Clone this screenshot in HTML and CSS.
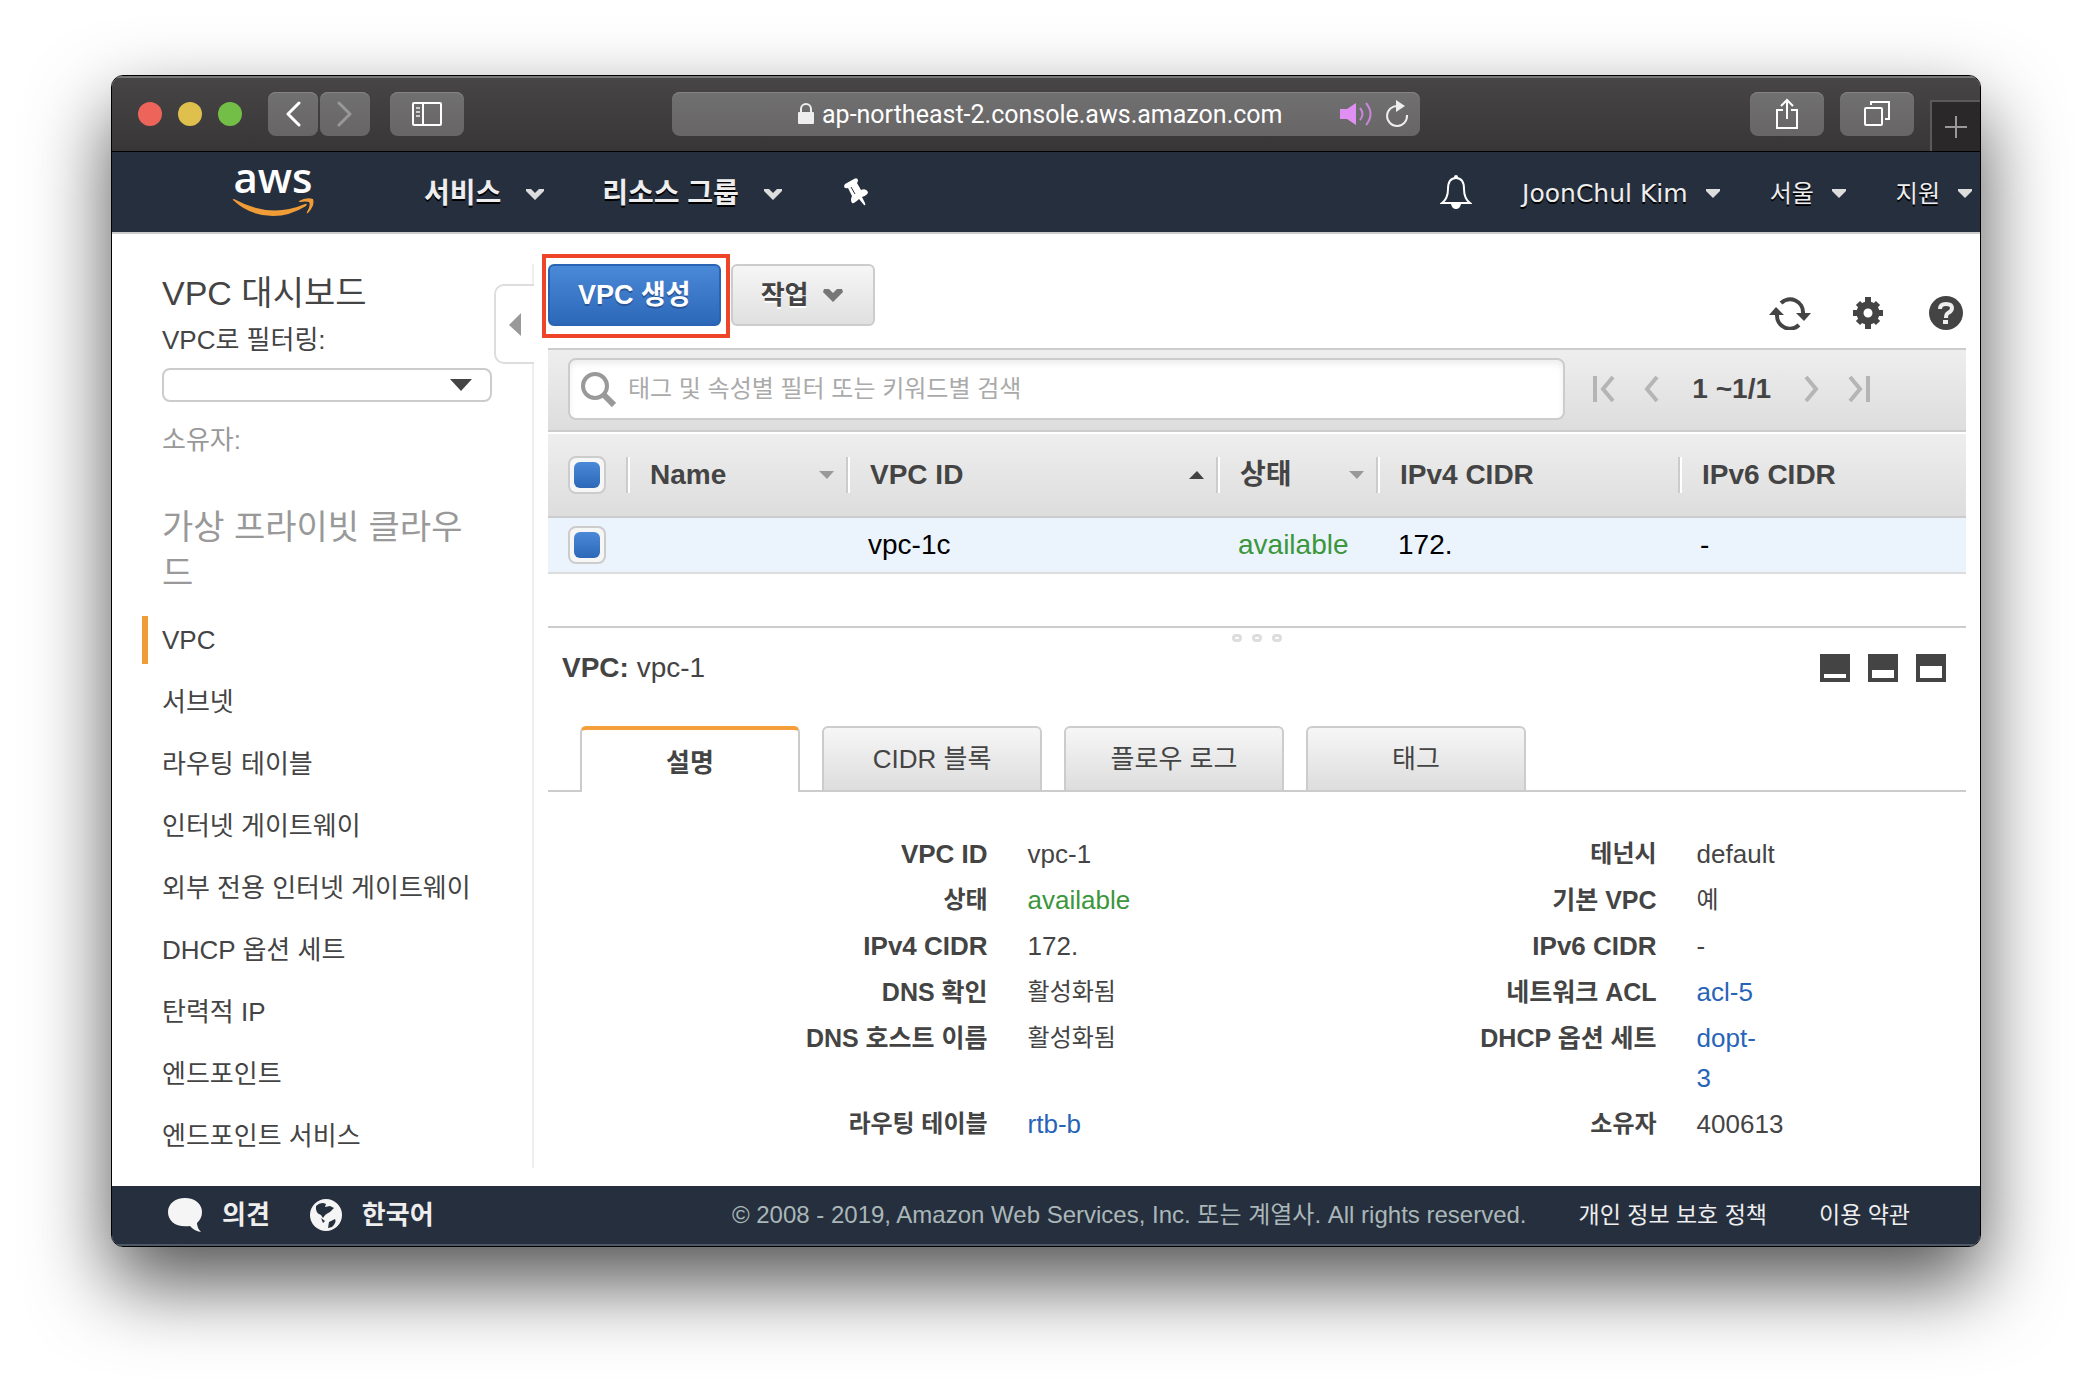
FILE: index.html
```html
<!doctype html>
<html lang="ko">

<head>
	<title>VPC 대시보드</title>
	<meta charset="UTF-8">
	<link rel="stylesheet" href="styles.css">
</head>

<body>

<div class="window">

	<!-- Browser toolbar -->
	<div class="chrome">
		<div class="chrome-left">
			<span class="light red"></span>
			<span class="light yellow"></span>
			<span class="light green"></span>
			<div class="history">
				<button class="chrome-btn narrow" aria-label="뒤로">
					<svg width="16" height="26" viewBox="0 0 16 26"><path d="M14 2 L3 13 L14 24" fill="none" stroke="#fff" stroke-width="3" stroke-linecap="round" stroke-linejoin="round"/></svg>
				</button>
				<button class="chrome-btn narrow" aria-label="앞으로">
					<svg width="16" height="26" viewBox="0 0 16 26"><path d="M2 2 L13 13 L2 24" fill="none" stroke="#98979a" stroke-width="3" stroke-linecap="round" stroke-linejoin="round"/></svg>
				</button>
			</div>
			<button class="chrome-btn" aria-label="사이드바">
				<svg width="30" height="24" viewBox="0 0 30 24" fill="none" stroke="#fff" stroke-width="2"><rect x="1" y="1" width="28" height="22" rx="1"/><path d="M11 1 V23"/><path d="M4 6 H8 M4 10 H8 M4 14 H8" stroke="#ccc"/></svg>
			</button>
		</div>
		<div class="address">
			<span></span>
			<label class="address-text">
				<svg width="16" height="22" viewBox="0 0 16 22"><rect x="0" y="9" width="16" height="12" rx="1" fill="#eee"/><path d="M3 10 V6 a5 5 0 0 1 10 0 V10" fill="none" stroke="#eee" stroke-width="2"/></svg>
				<input class="url" type="text" aria-label="주소" value="ap-northeast-2.console.aws.amazon.com">
			</label>
			<span class="address-icons">
				<svg width="34" height="24" viewBox="0 0 34 24"><path d="M0 7 H7 L16 1 V23 L7 17 H0 Z" fill="#e08ff2"/><path d="M20 6 Q25 12 20 18 M26 1 Q35 12 26 23" fill="none" stroke="#c984dc" stroke-width="2"/></svg>
				<svg width="24" height="28" viewBox="0 0 24 28"><path d="M13 6 A10 10 0 1 0 22 15" fill="none" stroke="#eee" stroke-width="2"/><path d="M11 0 L20 6 L11 12 Z" fill="#eee"/></svg>
			</span>
		</div>
		<div class="chrome-right">
			<button class="chrome-btn" aria-label="공유">
				<svg width="24" height="32" viewBox="0 0 24 32" fill="none" stroke="#fff" stroke-width="2"><path d="M8 12 H2 V30 H22 V12 H16 M12 21 V3 M6 8 L12 2 L18 8"/></svg>
			</button>
			<button class="chrome-btn" aria-label="탭 보기">
				<svg width="26" height="26" viewBox="0 0 26 26" fill="none" stroke="#fff" stroke-width="2"><rect x="1" y="7" width="17" height="17" rx="1"/><path d="M7 4 V1 H25 V18 H21"/></svg>
			</button>
			<button class="new-tab" aria-label="새 탭">
				<svg width="22" height="22" viewBox="0 0 22 22"><path d="M11 0 V22 M0 11 H22" stroke="#999" stroke-width="2"/></svg>
			</button>
		</div>
	</div>

	<!-- AWS console header -->
	<header class="nav">
		<a class="logo" href="#">
			<span class="logo-text">aws</span>
			<svg width="82" height="19" viewBox="0 0 82 19" fill="#f09d38"><path d="M1 2 Q0 1 2 1 Q38 21 73 6 Q76 5 74 8 Q58 18 41 18 Q18 18 1 2 Z"/><path d="M67 3 Q74 -1 81 1 Q83 8 76 15 Q74 16 75 14 Q79 7 77 4 Q74 3 68 4 Q66 4 67 3 Z"/></svg>
		</a>
		<button class="nav-main">서비스 <svg width="18" height="11" viewBox="0 0 18 11"><path d="M0 0 H5 L9 4 L13 0 H18 V2 L9 11 L0 2 Z" fill="#ddd"/></svg></button>
		<button class="nav-main">리소스 그룹 <svg width="18" height="11" viewBox="0 0 18 11"><path d="M0 0 H5 L9 4 L13 0 H18 V2 L9 11 L0 2 Z" fill="#ddd"/></svg></button>
		<button class="nav-icon" aria-label="고정">
			<svg width="24" height="28" viewBox="0 0 24 28"><path d="M1 6 L10 1 Q13 -1 14 2 Q14 4 13 5 L17 12 Q22 10 24 14 Q24 17 18 19 L21 25 Q22 28 20 27 L15 21 Q10 26 8 25 Q6 22 8 18 L4 10 Q0 11 0 8 Z" fill="#fff"/><path d="M7 9 L11 16" stroke="#262f3e"/></svg>
		</button>
		<span class="spacer"></span>
		<button class="nav-icon" aria-label="알림">
			<svg width="32" height="34" viewBox="0 0 32 34"><path d="M16 3 C9 3 8 9 8 14 C8 21 6 25 2 28 H30 C26 25 24 21 24 14 C24 9 23 3 16 3 Z" fill="none" stroke="#fff" stroke-width="2"/><circle cx="16" cy="2" r="2" fill="#fff"/><path d="M11 29 H21 Q20 34 16 34 Q12 34 11 29 Z" fill="#fff"/></svg>
		</button>
		<button class="nav-sub user">JoonChul Kim <svg width="14" height="9" viewBox="0 0 14 9"><path d="M0 0 H14 V2 L7 9 L0 2 Z" fill="#ddd"/></svg></button>
		<button class="nav-sub">서울 <svg width="14" height="9" viewBox="0 0 14 9"><path d="M0 0 H14 V2 L7 9 L0 2 Z" fill="#ddd"/></svg></button>
		<button class="nav-sub">지원 <svg width="14" height="9" viewBox="0 0 14 9"><path d="M0 0 H14 V2 L7 9 L0 2 Z" fill="#ddd"/></svg></button>
	</header>

	<div class="content">

		<aside class="sidebar">
			<button class="collapse" aria-label="접기">
				<svg width="12" height="23" viewBox="0 0 12 23"><path d="M12 0 V23 L0 12 Z" fill="#999"/></svg>
			</button>
			<h1>VPC 대시보드</h1>
			<label class="filter-label" for="vpc-filter">VPC로 필터링:</label>
			<div class="select-wrap">
				<select id="vpc-filter"><option></option></select>
				<svg width="22" height="12" viewBox="0 0 22 12"><path d="M0 0 H22 L11 12 Z" fill="#444"/></svg>
			</div>
			<p class="owner">소유자:</p>
			<h2>가상 프라이빗 클라우드</h2>
			<nav class="menu">
				<a class="current" href="#">VPC</a>
				<a href="#">서브넷</a>
				<a href="#">라우팅 테이블</a>
				<a href="#">인터넷 게이트웨이</a>
				<a href="#">외부 전용 인터넷 게이트웨이</a>
				<a href="#">DHCP 옵션 세트</a>
				<a href="#">탄력적 IP</a>
				<a href="#">엔드포인트</a>
				<a href="#">엔드포인트 서비스</a>
			</nav>
		</aside>

		<main class="main">

			<div class="actions">
				<div class="highlight">
					<button class="btn primary">VPC 생성</button>
				</div>
				<button class="btn">작업 <svg width="20" height="13" viewBox="0 0 20 13"><path d="M1 0 H6 L10 4 L14 0 H19 L20 3 L10 13 L0 3 Z" fill="#777"/></svg></button>
				<span class="spacer"></span>
				<div class="tools">
					<button class="tool" aria-label="새로 고침">
						<svg width="42" height="34" viewBox="0 0 42 34"><path d="M12 7 A13 13 0 0 1 34 17 M30 29 A13 13 0 0 1 8 19" fill="none" stroke="#444" stroke-width="4"/><path d="M27 17 H42 L35 25 Z M0 19 H15 L7 11 Z" fill="#444"/></svg>
					</button>
					<button class="tool" aria-label="설정">
						<svg width="30" height="32" viewBox="0 0 30 32"><circle cx="15" cy="16" r="8" fill="none" stroke="#444" stroke-width="7"/><path d="M15 0 V7 M15 25 V32 M0 16 H7 M23 16 H30 M5 6 L9 10 M21 22 L25 26 M25 6 L21 10 M9 22 L5 26" stroke="#444" stroke-width="6"/></svg>
					</button>
					<button class="tool" aria-label="도움말">
						<svg width="34" height="34" viewBox="0 0 34 34"><circle cx="17" cy="17" r="17" fill="#444"/><path d="M11 13 Q11 8 17 8 Q23 8 23 12 Q23 15 19 17 Q17 18 17 22" fill="none" stroke="#eee" stroke-width="4"/><rect x="14" y="24" width="5" height="4" fill="#eee"/></svg>
					</button>
				</div>
			</div>

			<div class="filter-bar">
				<label class="search">
					<svg width="35" height="35" viewBox="0 0 35 35" fill="none" stroke="#999"><circle cx="14" cy="14" r="12" stroke-width="4"/><path d="M23 23 L33 33" stroke-width="6"/></svg>
					<input type="text" aria-label="검색" placeholder="태그 및 속성별 필터 또는 키워드별 검색">
				</label>
				<div class="pager">
					<button aria-label="처음"><svg width="22" height="26" viewBox="0 0 22 26" fill="none" stroke="#b5b5b5" stroke-width="4"><path d="M2 0 V26 M20 1 L10 13 L20 25"/></svg></button>
					<button aria-label="이전"><svg width="16" height="26" viewBox="0 0 16 26" fill="none" stroke="#b5b5b5" stroke-width="4"><path d="M14 1 L4 13 L14 25"/></svg></button>
					<span>1 ~1/1</span>
					<button aria-label="다음"><svg width="16" height="26" viewBox="0 0 16 26" fill="none" stroke="#b5b5b5" stroke-width="4"><path d="M2 1 L12 13 L2 25"/></svg></button>
					<button aria-label="마지막"><svg width="22" height="26" viewBox="0 0 22 26" fill="none" stroke="#b5b5b5" stroke-width="4"><path d="M20 0 V26 M2 1 L12 13 L2 25"/></svg></button>
				</div>
			</div>

			<table class="vpc-table">
				<colgroup>
					<col class="c-check"><col class="c-name"><col class="c-id"><col class="c-state"><col class="c-v4"><col>
				</colgroup>
				<thead>
					<tr>
						<th><input type="checkbox" aria-label="모두 선택" checked></th>
						<th><div class="head">Name <svg width="15" height="8" viewBox="0 0 15 8"><path d="M0 0 H15 L8 8 Z" fill="#999"/></svg></div></th>
						<th><div class="head">VPC ID <svg width="15" height="8" viewBox="0 0 15 8"><path d="M0 8 H15 L8 0 Z" fill="#444"/></svg></div></th>
						<th><div class="head">상태 <svg width="15" height="8" viewBox="0 0 15 8"><path d="M0 0 H15 L8 8 Z" fill="#999"/></svg></div></th>
						<th><div class="head">IPv4 CIDR</div></th>
						<th><div class="head">IPv6 CIDR</div></th>
					</tr>
				</thead>
				<tbody>
					<tr>
						<td><input type="checkbox" aria-label="vpc-1c 선택" checked></td>
						<td></td>
						<td>vpc-1c</td>
						<td class="available">available</td>
						<td>172.</td>
						<td>-</td>
					</tr>
				</tbody>
			</table>

			<section class="detail">
				<div class="grip"><i></i><i></i><i></i></div>
				<div class="detail-head">
					<p><b>VPC:</b> vpc-1</p>
					<div class="sizes">
						<button aria-label="작게"><svg width="30" height="28" viewBox="0 0 30 28"><path d="M0 0 H30 V28 H0 Z" fill="#444"/><rect x="4" y="20" width="22" height="4" fill="#fff"/></svg></button>
						<button aria-label="중간"><svg width="30" height="28" viewBox="0 0 30 28"><path d="M0 0 H30 V28 H0 Z" fill="#444"/><rect x="4" y="16" width="22" height="8" fill="#fff"/></svg></button>
						<button aria-label="크게"><svg width="30" height="28" viewBox="0 0 30 28"><path d="M0 0 H30 V28 H0 Z" fill="#444"/><rect x="4" y="12" width="22" height="12" fill="#fff"/></svg></button>
					</div>
				</div>

				<div class="tabs">
					<button class="tab active">설명</button>
					<button class="tab">CIDR 블록</button>
					<button class="tab">플로우 로그</button>
					<button class="tab">태그</button>
				</div>

				<dl class="props">
					<dt>VPC ID</dt><dd>vpc-1</dd>
					<dt class="ko">테넌시</dt><dd>default</dd>
					<dt class="ko">상태</dt><dd class="available">available</dd>
					<dt class="mixed">기본 VPC</dt><dd class="ko">예</dd>
					<dt>IPv4 CIDR</dt><dd>172.</dd>
					<dt>IPv6 CIDR</dt><dd>-</dd>
					<dt class="mixed">DNS 확인</dt><dd class="ko">활성화됨</dd>
					<dt class="mixed">네트워크 ACL</dt><dd><a href="#">acl-5</a></dd>
					<dt class="mixed">DNS 호스트 이름</dt><dd class="ko">활성화됨</dd>
					<dt class="mixed">DHCP 옵션 세트</dt><dd><a href="#">dopt-<br>3</a></dd>
					<dt class="ko">라우팅 테이블</dt><dd><a href="#">rtb-b</a></dd>
					<dt class="ko">소유자</dt><dd>400613</dd>
				</dl>
			</section>

		</main>
	</div>

	<footer class="footer">
		<a class="foot-main" href="#"><svg width="34" height="34" viewBox="0 0 34 34"><path d="M17 0 C27 0 34 6 34 14 C34 19 32 22 29 25 Q29 30 33 34 Q26 33 22 28 C8 30 0 23 0 14 C0 6 7 0 17 0 Z" fill="#f5f5f5"/></svg>의견</a>
		<a class="foot-main" href="#"><svg width="32" height="32" viewBox="0 0 32 32"><circle cx="16" cy="16" r="16" fill="#f5f5f5"/><path d="M6 7 Q11 2 16 5 L15 8 L20 7 L24 9 L20 13 Q15 15 13 19 L11 16 Q5 14 6 7 Z M19 23 L25 20 Q27 23 22 28 L18 29 Z M11 19 L15 22 L13 24 Z" fill="#262f3e"/></svg>한국어</a>
		<span class="spacer"></span>
		<span class="copyright">© 2008 - 2019, Amazon Web Services, Inc. 또는 계열사. All rights reserved.</span>
		<a href="#">개인 정보 보호 정책</a>
		<a href="#">이용 약관</a>
	</footer>

</div>

</body>
</html>
```
FILE: styles.css
```css
* { box-sizing: border-box; }
body { margin: 0; padding: 75px 111px 147px; background: #fff; color: #444; font-family: "Liberation Sans", "Noto Sans CJK KR", sans-serif; font-size: 26px; line-height: 36px; }
h1, h2, p, dl, dd { margin: 0; }
button { margin: 0; padding: 0; border: 0; background: none; color: inherit; font: inherit; }
a { color: inherit; text-decoration: none; }
svg { display: block; flex: none; }
.spacer { flex: 1; }

.window { display: flex; flex-direction: column; min-height: calc(100vh - 222px); border: 1px solid #000; border-radius: 12px; overflow: hidden; background: #fff; box-shadow: 0 36px 80px rgba(0, 0, 0, 0.68); }

/* browser toolbar */
.chrome { display: grid; grid-template-columns: 1fr 40% 1fr; align-items: center; height: 76px; border-bottom: 1px solid #000; background: linear-gradient(#474546, #393637); box-shadow: inset 0 2px #777; }
.chrome-left { display: flex; align-items: center; gap: 16px; padding-left: 26px; }
.light { width: 24px; height: 24px; border-radius: 50%; }
.red { background: #ed655a; }
.yellow { background: #e0c04c; }
.green { background: #72be47; }
.history { display: flex; gap: 2px; margin: 0 4px 0 10px; }
.chrome-btn { display: flex; align-items: center; justify-content: center; width: 74px; height: 44px; border-radius: 8px; background: linear-gradient(#717071, #676566); box-shadow: inset 0 1px #858485; }
.narrow { width: 50px; }
.address { display: grid; grid-template-columns: 1fr auto 1fr; align-items: center; height: 44px; border-radius: 8px; background: linear-gradient(#717071, #676566); box-shadow: inset 0 1px #858485; color: #fff; }
.address-text { display: flex; align-items: center; gap: 8px; }
.url { width: 472px; padding: 2px 0 0; border: 0; background: none; color: #fff; font: 25px/36px Roboto, sans-serif; }
.address-icons { display: flex; align-items: center; justify-content: flex-end; gap: 11px; padding-right: 11px; }
.chrome-right { display: flex; align-items: center; justify-content: flex-end; gap: 16px; height: 75px; }
.new-tab { display: flex; align-items: center; justify-content: center; align-self: flex-end; width: 50px; height: 51px; border-top: 2px solid #5b595a; border-left: 2px solid #5b595a; background: #2b2829; }

/* console header */
.nav { display: flex; align-items: center; height: 82px; padding: 0 8px 0 120px; border-bottom: 2px solid #ccc; background: #262f3e; color: #eee; }
.nav button { display: flex; align-items: center; text-shadow: 0 2px #000; }
.logo { display: flex; flex-direction: column; align-items: center; gap: 4px; width: 82px; padding-bottom: 8px; color: #fff; }
.logo-text { font: 600 42px/34px "Open Sans", sans-serif; }
.nav-main { gap: 25px; margin-left: 58px; padding-top: 4px; font-size: 28px; font-weight: bold; }
.logo + .nav-main { margin-left: 110px; }
.nav-icon { margin-left: 62px; }
.nav-sub { gap: 18px; margin-left: 50px; padding-top: 3px; font-size: 24px; }
.user { font-family: "DejaVu Sans", sans-serif; font-size: 25px; }

.content { display: flex; flex: 1; }

/* sidebar */
.sidebar { position: relative; width: 422px; margin: 30px 0 18px; padding: 6px 40px 0 50px; border-right: 2px solid #eee; }
.sidebar h1 { font-size: 34px; font-weight: normal; line-height: 46px; }
.sidebar h2 { margin: 46px 0 20px; color: #999; font-size: 34px; font-weight: normal; line-height: 46px; word-break: break-all; }
.collapse { position: absolute; top: 20px; right: -2px; display: flex; align-items: center; justify-content: center; width: 40px; height: 80px; border: 2px solid #ddd; border-right: 0; border-radius: 10px 0 0 10px; background: #fff; }
.filter-label { display: block; margin: 6px 0 10px; }
.select-wrap { display: grid; align-items: center; justify-items: end; }
.select-wrap > * { grid-area: 1 / 1; }
.select-wrap select { width: 100%; height: 34px; border: 2px solid #ccc; border-radius: 8px; background: #fff; appearance: none; }
.select-wrap svg { margin-right: 20px; pointer-events: none; }
.owner { margin-top: 20px; color: #999; }
.menu { display: flex; flex-direction: column; gap: 14px; margin-left: -20px; }
.menu a { padding-left: 14px; border-left: 6px solid transparent; line-height: 48px; white-space: nowrap; }
.menu .current { border-color: #f09d38; }

/* action buttons */
.main { flex: 1; min-width: 0; padding: 20px 14px 0; }
.actions { display: flex; align-items: flex-start; margin-bottom: 10px; }
.highlight { margin-left: -6px; margin-right: 1px; padding: 6px 5px 8px 2px; border: 4px solid #ee4427; }
.btn { display: flex; align-items: center; gap: 14px; height: 62px; padding: 0 30px 0 28px; border: 2px solid #ccc; border-radius: 6px; background: linear-gradient(#f6f6f6, #e0e0e0); font-weight: bold; text-shadow: 0 2px #fff; }
.actions > .btn { margin-top: 10px; }
.primary { padding: 0 28px; border-color: #2a62b4; background: linear-gradient(#4a89d8, #2d68b8); color: #fff; font-size: 27px; text-shadow: 0 2px #2a5596; }
.tools { display: flex; gap: 38px; margin-top: 42px; }
.tool { display: flex; align-items: center; justify-content: center; width: 40px; height: 34px; }

/* search and paging */
.filter-bar { display: flex; align-items: center; padding: 8px 96px 10px 20px; border: solid #ccc; border-width: 2px 0; background: linear-gradient(#eee, #ddd); }
.search { display: flex; flex: 1; align-items: center; gap: 12px; height: 62px; padding: 0 11px; border: 2px solid #ccc; border-radius: 8px; background: #fff; box-shadow: inset 0 4px 6px #eee; }
.search input { flex: 1; min-width: 0; padding: 0; border: 0; outline: 0; background: none; font: inherit; font-size: 24px; }
.search input::placeholder { color: #aaa; }
.pager { display: flex; align-items: center; gap: 28px; margin-left: 28px; font-size: 28px; font-weight: bold; }
.pager span { margin: 0 5px; }

/* vpc list */
.vpc-table { width: 100%; margin-top: 2px; border-collapse: collapse; table-layout: fixed; font-size: 28px; }
.c-check { width: 78px; }
.c-name { width: 220px; }
.c-id { width: 370px; }
.c-state { width: 160px; }
.c-v4 { width: 302px; }
.vpc-table th { height: 83px; padding: 0; border-bottom: 2px solid #ccc; text-align: left; }
.vpc-table thead { background: linear-gradient(#eee, #ddd); }
.vpc-table td { height: 56px; padding: 0 0 0 22px; border-bottom: 2px solid #ddd; color: #000; }
.vpc-table th:first-child, .vpc-table td:first-child { padding-left: 20px; }
.vpc-table tbody tr { background: #ebf3fd; }
.head { display: flex; align-items: center; justify-content: space-between; padding: 0 12px 0 22px; border-left: 2px solid #ccc; box-shadow: inset 2px 0 #fff; }
.vpc-table input { display: grid; place-items: center; width: 38px; height: 38px; margin: 0; border: 2px solid #ccc; border-radius: 8px; background: #f6f6f6; appearance: none; }
.vpc-table input:checked::before { content: ""; width: 26px; height: 26px; border-radius: 6px; background: linear-gradient(#4a89d8, #2d68b8); }
.available, .vpc-table .available { color: #3c963c; }

/* detail pane */
.detail { margin-top: 52px; border-top: 2px solid #ccc; }
.grip { display: flex; justify-content: center; gap: 10px; padding-top: 6px; }
.grip i { width: 10px; height: 8px; border: 3px solid #ddd; border-radius: 4px; }
.detail-head { display: flex; align-items: center; justify-content: space-between; padding: 6px 20px 38px 14px; font-size: 28px; line-height: 40px; }
.sizes { display: flex; gap: 18px; }
.tabs { display: flex; gap: 22px; padding-left: 32px; border-bottom: 2px solid #ccc; }
.tab { width: 220px; height: 64px; border: 2px solid #ccc; border-bottom: 0; border-radius: 6px 6px 0 0; background: linear-gradient(#f6f6f6, #ddd); }
.tab.active { height: 66px; margin-bottom: -2px; padding-top: 4px; border-top: 4px solid #f59f3a; background: #fff; font-weight: bold; }
.props { display: grid; grid-template-columns: 31% 16% 1fr 19%; gap: 6px 40px; padding-top: 42px; line-height: 40px; }
.props dt { font-weight: bold; text-align: right; }
.props a { color: #2764b8; }
.props .ko { font-size: 24px; }
.props .mixed { font-size: 25px; }

/* footer */
.footer { display: flex; align-items: center; gap: 52px; height: 60px; padding: 0 70px 0 56px; border-bottom: 2px solid #4d5a66; background: #262f3e; color: #eee; font-size: 23px; }
.foot-main { display: flex; align-items: center; gap: 20px; margin-right: -12px; font-size: 26px; font-weight: bold; }
.copyright { color: #aab7b8; font-size: 24px; }
```
